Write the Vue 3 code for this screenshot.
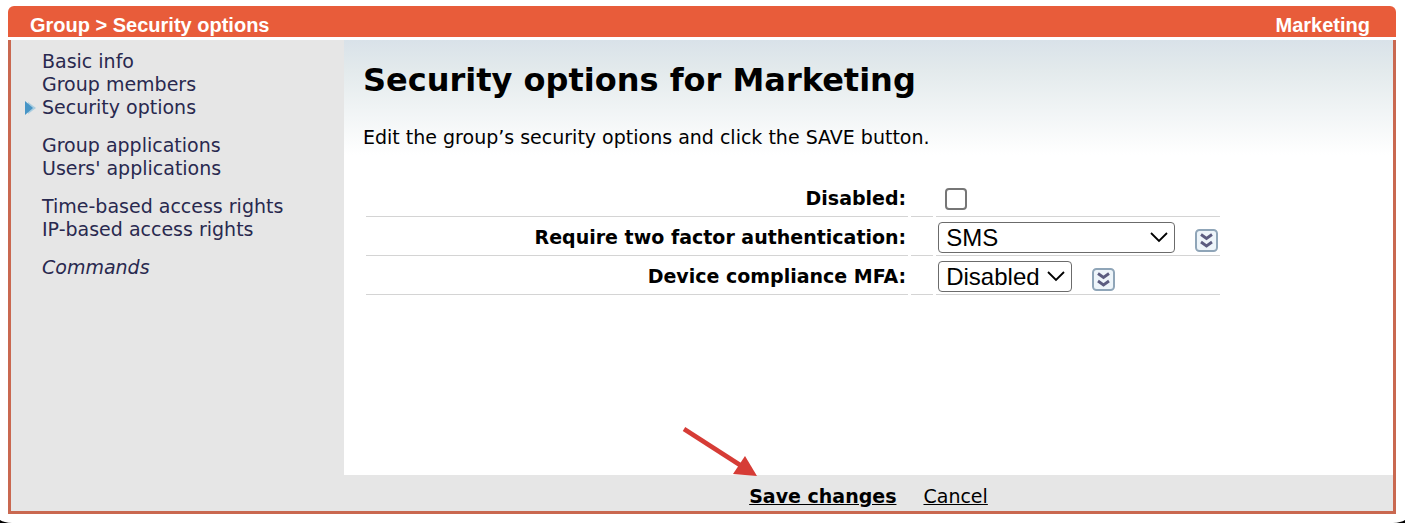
<template>
  <div class="page">
    <div class="frame">
      <header class="title-bar">
        <span>Group &gt; Security options</span>
        <span>{{ groupName }}</span>
      </header>

      <div class="body">
        <nav class="sidebar">
          <ul v-for="(section, index) in menu" :key="index">
            <li v-for="item in section" :key="item.label" :class="{ active: item.active }">
              <svg v-if="item.active" class="marker" width="11" height="14" viewBox="0 0 11 14">
                <path d="M3 1 L11 7 L3 13 Z" fill="#a9cde0" />
                <path d="M0 0 L8 7 L0 14 Z" fill="#4795c6" />
              </svg>
              <a href="#" :class="{ command: item.command }">{{ item.label }}</a>
            </li>
          </ul>
        </nav>

        <div class="main">
          <form class="content" @submit.prevent>
            <h1>Security options for {{ groupName }}</h1>
            <p>Edit the group’s security options and click the SAVE button.</p>

            <table class="options">
              <colgroup>
                <col />
                <col class="col-spacer" />
                <col class="col-field" />
              </colgroup>
              <tbody>
                <tr>
                  <th scope="row"><label for="disabled">Disabled:</label></th>
                  <td></td>
                  <td>
                    <div class="field">
                      <input type="checkbox" id="disabled" v-model="form.disabled" />
                    </div>
                  </td>
                </tr>
                <tr v-for="row in rows" :key="row.id">
                  <th scope="row"><label :for="row.id">{{ row.label }}</label></th>
                  <td></td>
                  <td>
                    <div class="field">
                      <div class="select-box" :class="row.size">
                        <select :id="row.id" v-model="form[row.id]">
                          <option v-for="option in row.options" :key="option" :value="option">{{ option }}</option>
                        </select>
                        <svg class="chevron" width="18" height="11" viewBox="0 0 18 11">
                          <path d="M1 1 L9 9 L17 1" fill="none" stroke="#000" stroke-width="1.8" />
                        </svg>
                      </div>
                      <button type="button" class="expand" aria-label="Apply to all">
                        <svg width="23" height="23" viewBox="0 0 23 23">
                          <rect x="1" y="1" width="21" height="21" rx="3.5" fill="#eef5fa" stroke="#8fa5b8" stroke-width="2" />
                          <path d="M6 5.5 L11.5 9.5 L17 5.5 M6 13 L11.5 17 L17 13" fill="none" stroke="#5c5c80" stroke-width="2.8" />
                        </svg>
                      </button>
                    </div>
                  </td>
                </tr>
              </tbody>
            </table>
          </form>

          <footer class="actions">
            <a href="#" class="save">
              Save changes
              <svg class="arrow" width="76" height="52" viewBox="0 0 76 52">
                <path d="M2 3 L58 39" stroke="#d63c36" stroke-width="4.6" />
                <path d="M63 30 L75 50 L51 48 Z" fill="#d63c36" />
              </svg>
            </a>
            <a href="#">Cancel</a>
          </footer>
        </div>
      </div>
    </div>

    <svg class="corner left" width="12" height="3" viewBox="0 0 12 3">
      <path d="M0 0 Q4 2.5 12 3 L0 3 Z" />
    </svg>
    <svg class="corner right" width="12" height="3" viewBox="0 0 12 3">
      <path d="M12 0 Q8 2.5 0 3 L12 3 Z" />
    </svg>
  </div>
</template>

<script setup>
import { reactive } from 'vue'

const groupName = 'Marketing'

const menu = [
  [
    { label: 'Basic info' },
    { label: 'Group members' },
    { label: 'Security options', active: true }
  ],
  [
    { label: 'Group applications' },
    { label: "Users' applications" }
  ],
  [
    { label: 'Time-based access rights' },
    { label: 'IP-based access rights' }
  ],
  [
    { label: 'Commands', command: true }
  ]
]

const rows = [
  { id: 'twoFactor', label: 'Require two factor authentication:', size: 'wide', options: ['SMS', 'Disabled'] },
  { id: 'compliance', label: 'Device compliance MFA:', size: 'narrow', options: ['Disabled', 'Enabled'] }
]

const form = reactive({
  disabled: false,
  twoFactor: 'SMS',
  compliance: 'Disabled'
})
</script>

<style>
body {
  margin: 0;
  background: #fff;
}
</style>

<style scoped>
.page {
  position: relative;
  display: flex;
  flex-direction: column;
  box-sizing: border-box;
  min-height: 100vh;
  padding: 6px 9px 9px 8px;
  font-family: Verdana, "DejaVu Sans", sans-serif;
  font-size: 19px;
  line-height: 23px;
  color: #000;
}

.frame {
  flex: 1;
  display: flex;
  flex-direction: column;
}

.title-bar {
  display: flex;
  justify-content: space-between;
  padding: 8px 26px 0 22px;
  margin-bottom: 3px;
  background: #e85c3a;
  border-radius: 6px 6px 0 0;
  color: #fff;
  font-family: Helvetica, "Liberation Sans", sans-serif;
  font-size: 20px;
  font-weight: bold;
}

.body {
  flex: 1;
  display: flex;
  border: 3px solid #c96850;
  border-top: 0;
  background: #e6e6e6;
}

.sidebar {
  box-sizing: border-box;
  width: 333px;
  flex-shrink: 0;
  padding: 10px 14px;
}

.sidebar ul {
  margin: 0 0 15px;
  padding: 0;
  list-style: none;
}

.sidebar li {
  display: flex;
  align-items: center;
  padding-left: 17px;
}

.sidebar li.active {
  gap: 6px;
  padding-left: 0;
}

.sidebar a {
  color: #29294f;
  text-decoration: none;
}

.sidebar .command {
  font-style: italic;
}

.main {
  flex: 1;
  display: flex;
  flex-direction: column;
}

.content {
  flex: 1;
  padding: 20px 18px 20px 19px;
  background: linear-gradient(#d9e2e9, #e3eaec 30px, #fff 115px);
}

.content h1 {
  margin: 0 0 26px;
  font-size: 32px;
  line-height: 40px;
}

.content p {
  margin: 0 0 29px;
}

.options {
  width: 85%;
  table-layout: fixed;
  border-spacing: 3px 0;
}

.col-spacer {
  width: 22px;
}

.col-field {
  width: 284px;
}

.options th,
.options td {
  height: 39px;
  padding: 3px 2px 0;
  box-sizing: border-box;
  border-bottom: 1px solid #d4d4d4;
  text-align: right;
  vertical-align: middle;
}

.field {
  display: flex;
  align-items: center;
}

.field input {
  appearance: none;
  width: 22px;
  height: 22px;
  margin: 0 7px;
  border: 2px solid #767676;
  border-radius: 4px;
  background: #fff;
}

.select-box {
  position: relative;
}

.select-box.wide {
  width: 237px;
}

.select-box.narrow {
  width: 134px;
}

.select-box select {
  display: block;
  appearance: none;
  width: 100%;
  height: 31px;
  padding: 0 7px;
  border: 1px solid #6b6b6b;
  border-radius: 4px;
  background: #fff;
  color: #000;
  font-family: Helvetica, "Liberation Sans", sans-serif;
  font-size: 24px;
}

.chevron {
  position: absolute;
  top: 10px;
  right: 7px;
  pointer-events: none;
}

.expand {
  margin: 6px 0 0 20px;
  padding: 0;
  border: 0;
  background: none;
}

.expand svg {
  display: block;
}

.actions {
  display: flex;
  justify-content: center;
  gap: 27px;
  padding: 10px 0 3px;
}

.actions a {
  color: #000;
}

.save {
  position: relative;
  font-weight: bold;
}

.arrow {
  position: absolute;
  right: 138px;
  bottom: 30px;
}

.corner {
  position: absolute;
  bottom: 0;
}

.corner.left {
  left: 0;
}

.corner.right {
  right: 0;
}
</style>
